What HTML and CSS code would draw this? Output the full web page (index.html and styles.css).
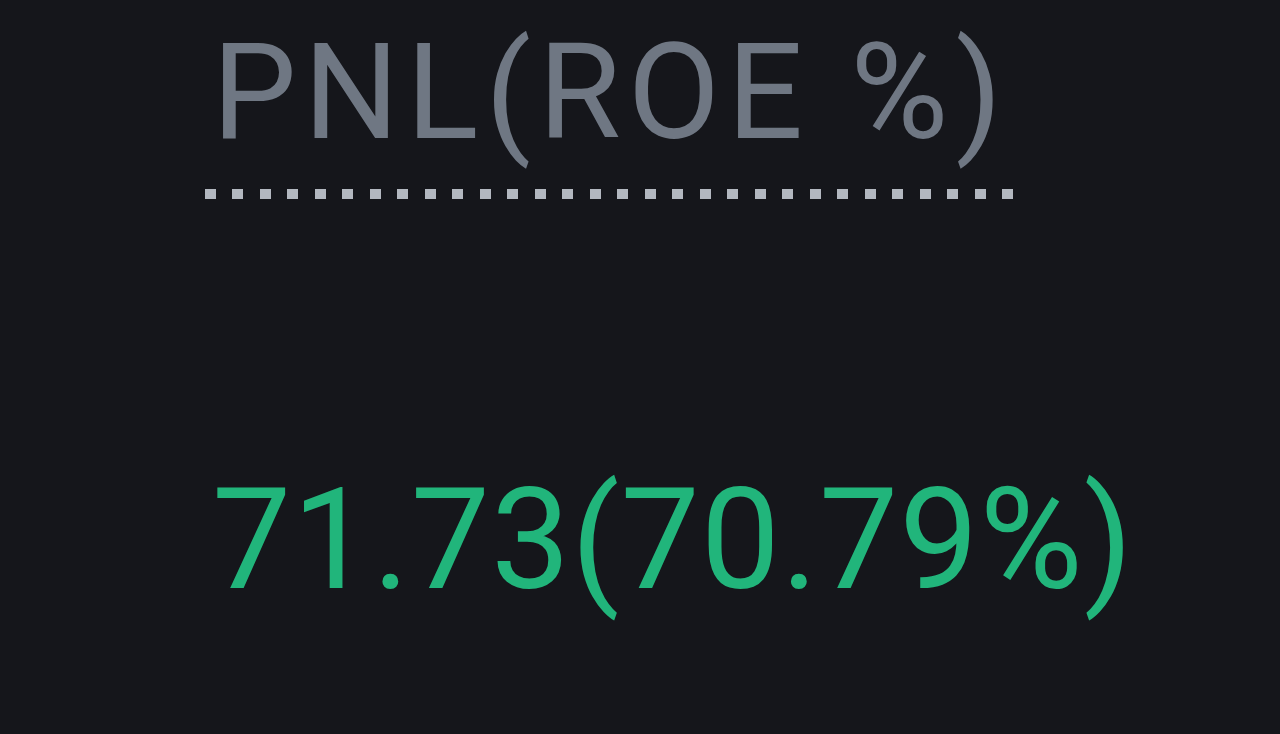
FILE: index.html
```html
<!DOCTYPE html>
<html lang="en">
  <head>
    <meta charset="UTF-8" />
    <meta name="viewport" content="width=device-width, initial-scale=1.0" />
    <link rel="stylesheet" href="styles.css">
    <title>PNL</title>
  </head>
  <body>
    <div class="pnl">
      <div class="pnl-label">PNL(ROE %)</div>
      <div class="pnl-value">71.73(70.79%)</div>
    </div>
  </body>
</html>
```

FILE: styles.css
```css
body {
  margin: 0;
  background-color: #15161b;
  font-family: Roboto, "Noto Sans", sans-serif;
  min-height: 100vh;
}
.pnl {
  display: flex;
  flex-direction: column;
  align-items: flex-start;
  padding: 26px 0 0 205px;
}
.pnl-label {
  width: 803px;
  font-size: 134px;
  font-weight: 380;
  line-height: 1;
  letter-spacing: 7px;
  white-space: nowrap;
  color: #6f7783;
  padding: 0 0 39px 7px;
  background-image: repeating-linear-gradient(to right, #b3b8c0 0 11px, transparent 11px 27.5px);
  background-size: 100% 10px;
  background-position: left bottom;
  background-repeat: no-repeat;
}
.pnl-value {
  margin-top: 270px;
  font-size: 141px;
  font-weight: 380;
  line-height: 1;
  letter-spacing: 1px;
  white-space: nowrap;
  color: #21b57b;
  padding-left: 7px;
}
```
